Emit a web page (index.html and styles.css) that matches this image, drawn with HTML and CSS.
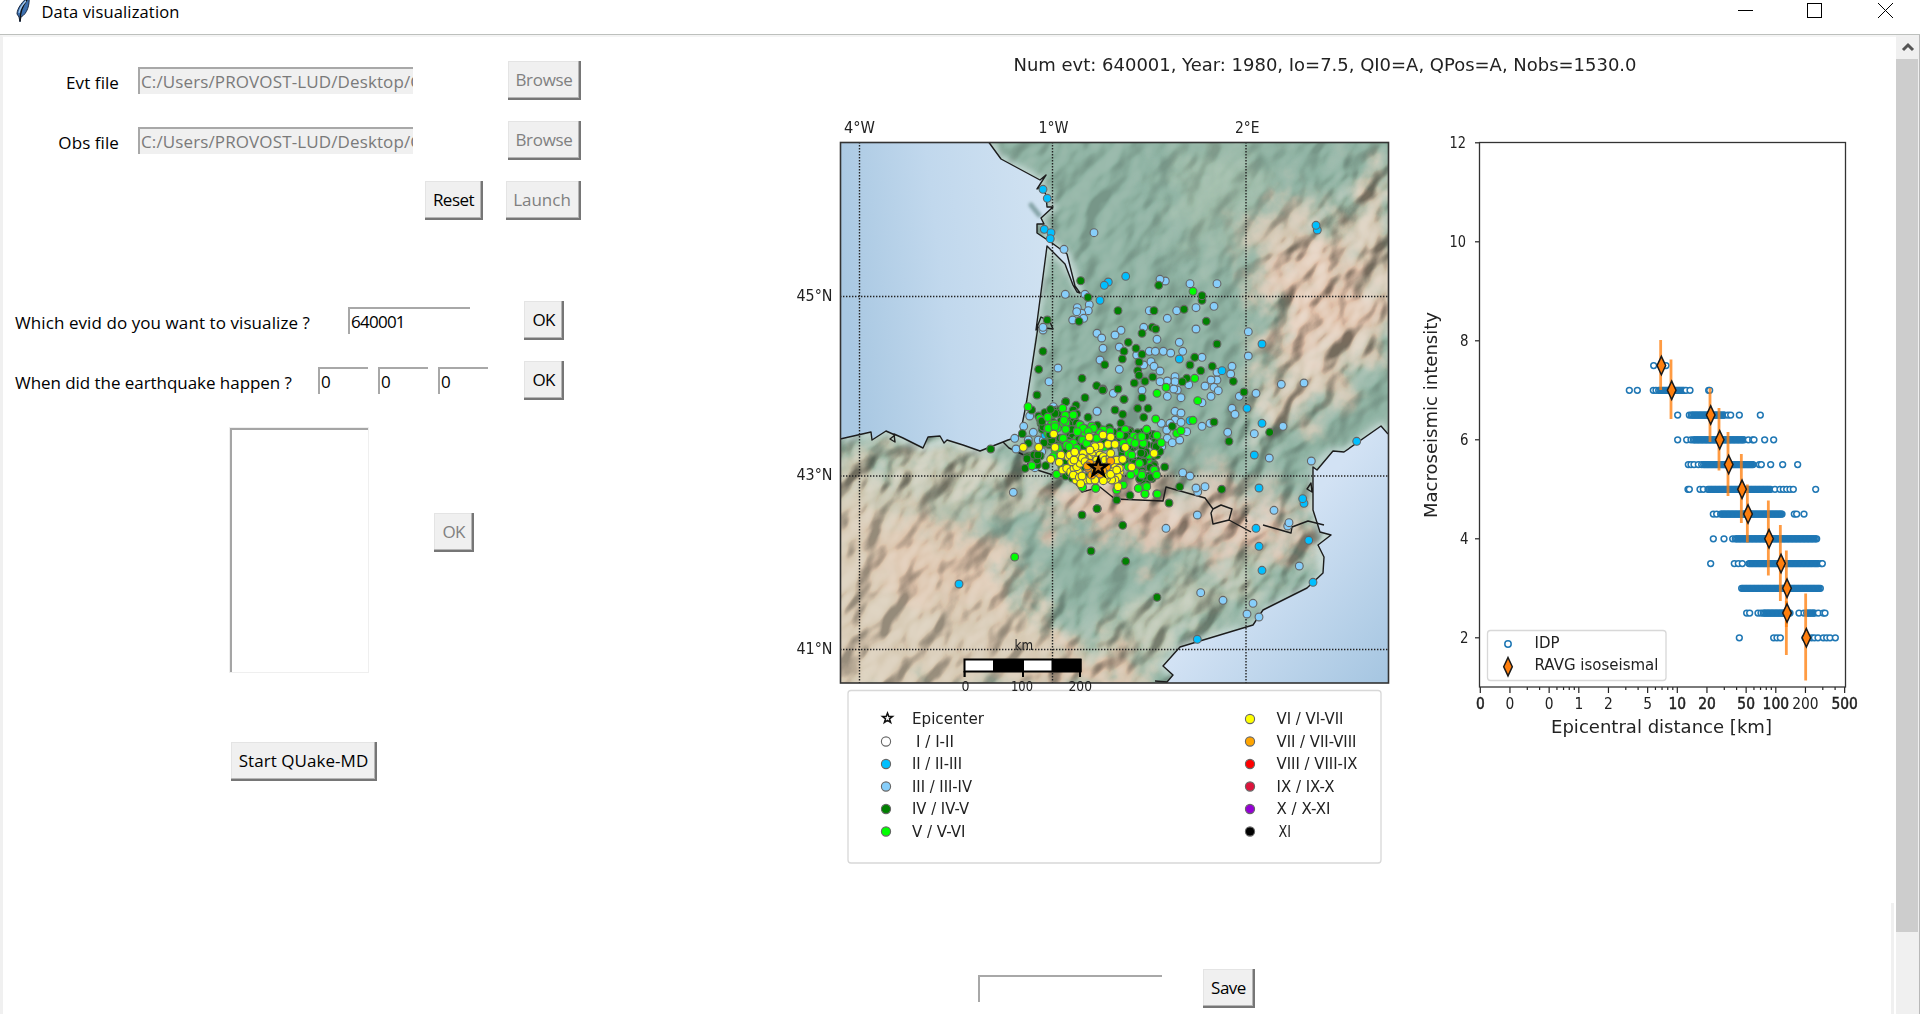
FILE: index.html
```html
<!DOCTYPE html>
<html lang="en">
<head>
<meta charset="utf-8">
<title>Data visualization</title>
<link rel="stylesheet" href="styles.css">
</head>
<body>
<header class="titlebar">
  <svg class="feather" width="18" height="24" viewBox="0 0 18 24">
    <path d="M14 -4C8 1 2 8 2 14l2 3 1 5 1-5c6-3 9-12 8-21z" fill="#3c6fae" stroke="#1b2b45" stroke-width="1"/>
    <path d="M12 0C8 5 5 12 5 21" fill="none" stroke="#111" stroke-width="1.3"/>
    <path d="M11 1C7 5 5 8 4 13" fill="none" stroke="#a9cdf0" stroke-width="1.2"/>
  </svg>
  <span class="title">Data visualization</span>
  <svg class="controls" width="160" height="20" viewBox="0 0 160 20" shape-rendering="crispEdges">
    <path d="M0 10.5H15M69.5 3.500H83.500V17.500H69.500Z" fill="none" stroke="#000"/>
    <path d="M140 3L155 18M155 3L140 18" stroke="#000" shape-rendering="auto"/>
  </svg>
</header>
<div class="window">
  <main class="content">
    <section class="form">
      <div class="row">
        <label class="label file-label">Evt file</label>
        <div class="entry path disabled"><span>C:/Users/PROVOST-LUD/Desktop/Q</span></div>
        <button class="btn browse disabled">Browse</button>
      </div>
      <div class="row">
        <label class="label file-label">Obs file</label>
        <div class="entry path disabled"><span>C:/Users/PROVOST-LUD/Desktop/Q</span></div>
        <button class="btn browse disabled">Browse</button>
      </div>
      <div class="row actions">
        <button class="btn reset">Reset</button>
        <button class="btn launch disabled">Launch</button>
      </div>
      <div class="row evid">
        <label class="label question">Which evid do you want to visualize ?</label>
        <div class="entry evid-entry"><span>640001</span></div>
        <button class="btn ok">OK</button>
      </div>
      <div class="row">
        <label class="label question when">When did the earthquake happen ?</label>
        <div class="dates">
          <div class="entry"><span>0</span></div>
          <div class="entry"><span>0</span></div>
          <div class="entry"><span>0</span></div>
        </div>
        <button class="btn ok">OK</button>
      </div>
      <div class="list-row">
        <div class="listbox"></div>
        <button class="btn ok disabled">OK</button>
      </div>
      <button class="btn start">Start QUake-MD</button>
    </section>
    <section class="results">
      <svg class="figure" width="1100" height="835" viewBox="780 35 1100 835">
        <defs>
          <clipPath id="frame"><rect x="840.500" y="142.500" width="548" height="540.500"/></clipPath>
          <linearGradient id="atl" x1="0" y1=".35" x2="1" y2=".2">
            <stop offset="0" stop-color="#a9c8e2"/><stop offset=".4" stop-color="#c1d8ed"/><stop offset="1" stop-color="#d5e5f3"/>
          </linearGradient>
          <linearGradient id="med" gradientUnits="userSpaceOnUse" x1="1260" y1="560" x2="1400" y2="680">
            <stop offset="0" stop-color="#d2e2f4"/><stop offset="1" stop-color="#a3c4e0"/>
          </linearGradient>
          <filter id="patch" x="-10%" y="-10%" width="120%" height="120%">
            <feGaussianBlur stdDeviation="13" result="b"/>
            <feTurbulence type="fractalNoise" baseFrequency=".03" numOctaves="4" seed="4" result="n"/>
            <feDisplacementMap in="b" in2="n" scale="80" xChannelSelector="R" yChannelSelector="G"/>
          </filter>
          <filter id="relief" x="0" y="0" width="100%" height="100%" color-interpolation-filters="sRGB">
            <feTurbulence type="fractalNoise" baseFrequency=".024 .042" numOctaves="3" seed="11"/>
            <feColorMatrix values="0 0 0 0 0  0 0 0 0 0  0 0 0 0 0  1 0 0 0 0"/>
            <feGaussianBlur stdDeviation="2"/>
            <feDiffuseLighting surfaceScale="12" diffuseConstant=".84" lighting-color="#fff">
              <feDistantLight azimuth="250" elevation="38"/>
            </feDiffuseLighting>
            <feColorMatrix values=".5 0 0 0 .28  0 .48 0 0 .27  0 0 .48 0 .26  0 0 0 1 0"/>
          </filter>
          <filter id="soft" x="-20%" y="-20%" width="140%" height="140%"><feGaussianBlur stdDeviation="14"/></filter>
          <filter id="halo" x="-20%" y="-20%" width="140%" height="140%"><feGaussianBlur stdDeviation="3"/></filter>
          <filter id="islet" x="-100%" y="-100%" width="300%" height="300%"><feGaussianBlur stdDeviation="1.5"/></filter>
          <mask id="high" maskUnits="userSpaceOnUse" x="800" y="100" width="640" height="620">
            <rect x="800" y="100" width="640" height="620" fill="#585858"/>
            <g fill="none" stroke="#fff" filter="url(#soft)" stroke-linecap="round">
              <path d="M830 465L1060 480L1180 510L1300 525" stroke-width="56"/>
              <path d="M1270 420L1300 330L1290 250L1390 180L1380 330Z" stroke-width="50" fill="#fff"/>
              <path d="M840 520L960 550L1040 620L860 690Z" stroke-width="60" fill="#aaa" stroke="#aaa"/>
              <path d="M1050 690L1200 600L1300 560" stroke-width="70" stroke="#ccc"/>
            </g>
          </mask>
        </defs>
        <g clip-path="url(#frame)">
          <rect x="840" y="142" width="550" height="542" fill="#8cb2a3"/>
          <g filter="url(#patch)">
            <path d="M800 500H900L960 520L1010 560L1050 620L1120 700H800Z" fill="#d5c9b4"/>
            <path d="M800 455H960L1060 485L1120 490V520L1000 500L880 500H800Z" fill="#c3c5b1"/>
            <path d="M1040 488L1120 495L1190 508L1320 518L1310 545L1230 555L1140 540L1050 520Z" fill="#dfc1ad"/>
            <path d="M890 525L970 525L1020 580L1010 610L900 600L860 550Z" fill="#dcc6b0"/>
            <path d="M1050 475L1170 470L1300 500L1290 520L1170 520Z" fill="#cdbfae"/>
            <path d="M1250 420L1270 370L1260 290L1235 250L1260 200L1300 190L1330 260L1350 180L1400 180V330L1340 400L1290 430Z" fill="#d0c5b1"/>
            <path d="M1300 230L1325 280L1345 250L1370 280L1350 340L1290 350L1270 290Z" fill="#e0c6b2"/>
            <path d="M1050 660L1140 600L1240 560L1290 560L1180 640L1120 700H1050Z" fill="#bec5b2" opacity=".8"/>
            <path d="M1020 660L1090 640L1140 670L1140 700H1020Z" fill="#dac4ae"/>
            <path d="M1180 140L1260 150L1230 240L1180 260Z" fill="#a6c1ae" opacity=".6"/>
          </g>
          <g class="hillshade" mask="url(#high)"><rect transform="rotate(-48 1115 412)" x="700" y="0" width="830" height="830" filter="url(#relief)"/></g>
          <path class="halo" d="M989 142.500L1001 159L1040 180L1046 195L1053 207L1041 218L1052 243L1067 254L1080 293L1065 264L1047 246L1036 330L1027 399L1021 430L1008 440L980 451L947 440L923 448L886 431L841 439M1388 434L1381 426L1344 452L1333 451L1313 467V510L1320 532L1331 535L1318 545L1323 573L1307 588L1263 610L1253 625L1180 647L1163 666L1173 675"/>
          <path fill="url(#atl)" d="M840 142H989L1001 159L1040 180L1046 175L1037 189L1046 195L1047 207L1053 207L1041 218L1044 224H1037V233L1052 243L1067 254L1075 286L1080 293L1075 288L1065 264L1047 246L1036 330L1027 399L1025 410L1021 430L1018 437L1008 440L980 451L947 440L944 443L940 436L928 437L923 448L903 438L886 431L872 440L871 432L840 439Z"/>
          <path fill="url(#med)" d="M1390 434L1381 426L1344 452L1333 451L1317 470L1313 467V510L1320 532L1331 535L1318 545L1324 557L1323 573L1307 588L1263 610L1253 625L1180 647L1163 666L1173 675L1166 684H1390Z"/>
          <path d="M1031 205L1039 215" stroke="#7e9ea0" stroke-width="5" stroke-linecap="round" filter="url(#islet)" opacity=".9"/>
          <g class="coast">
            <path d="M989 142.500L1001 159L1040 180L1046 175L1037 189L1042 186L1046 195L1047 207L1053 207L1041 218L1044 224H1037V233L1052 243L1067 254L1071 270L1075 286L1080 293L1077 292L1073 285L1065 264L1047 246L1036 330L1041 317L1050 322L1053 329L1038 327L1027 399L1025 410L1021 430L1018 437L1008 440L1003 442L980 451L963 445L947 440L944 443L940 436L928 437L923 448L903 438L894 434L895 442L890 439L895 435L886 431L872 440L871 432L840 439"/>
            <path d="M1003 442L1009 448L1028 457V467L1053 475L1072 478L1082 492L1100 487L1115 499L1163 501L1166 487L1205 498L1213 509L1211 513L1213 524L1229 520L1232 509L1221 505L1213 509M1229 520L1251 532M1246 519L1247 522M1263 525L1291 533L1292 527L1308 521L1324 525"/>
            <path d="M1388 434L1381 426L1344 452L1333 451L1317 470L1313 467V510L1320 532L1331 535L1318 545L1324 557L1323 573L1307 588L1263 610L1253 625L1180 647L1163 666L1173 675L1167 682L1155 681M1307 489L1311 483L1312 492Z"/>
          </g>
          <path class="graticule" d="M859.500 142V683M1052.500 142V683M1246 142V683M840 296.500H1389M840 476H1389M840 649.500H1389"/>
        </g>
        <g id="quakes" class="quakes"></g>
        <path d="M0 -9L2.200 -2.900L8.800 -2.800L3.500 1.200L5.500 7.500L0 3.700L-5.500 7.500L-3.500 1.200L-8.800 -2.800L-2.200 -2.900Z" transform="translate(1098.300 467.500)" fill="#b36b12" stroke="#000" stroke-width="2.600"/>
        <rect x="840.500" y="142.500" width="548" height="540.500" class="box"/>
        <g class="tick">
          <text x="844" y="132.500" textLength="31">4°W</text><text x="1038.500" y="132.500" textLength="30">1°W</text><text x="1235" y="132.500" textLength="24.500">2°E</text>
          <text x="796.500" y="301" textLength="36">45°N</text><text x="796.500" y="479.500" textLength="36">43°N</text><text x="796.500" y="654" textLength="36">41°N</text>
        </g>
        <rect x="848" y="690.500" width="533" height="172.500" rx="3" class="legend-box"/>
        <rect x="964.500" y="659.500" width="116" height="12" fill="#fff" stroke="#000" stroke-width="2"/>
        <path d="M993 659H1024V672H993ZM1051.500 659H1081.500V672H1051.500ZM963.500 671h2.200v6h-2.200zM1022 671h2v6h-2zM1079 671h2v6h-2z"/>
        <g class="scale">
          <text x="1014.500" y="650" textLength="18.500">km</text><text x="961.500" y="690.500" textLength="8">0</text><text x="1011" y="690.500" textLength="22">100</text><text x="1068.500" y="690.500" textLength="23.500">200</text>
        </g>
        <path d="M0 -5L1.300 -1.600L5 -1.500L2 .8L3.100 4.400L0 2.300L-3.100 4.400L-2 .8L-5 -1.500L-1.300 -1.600Z" transform="translate(887.500 718)" fill="#fff" stroke="#111" stroke-width="1.500"/>
        <g class="quakes">
          <circle cx="886" cy="741.500" r="4.600" fill="#fff"/><circle cx="886" cy="764" r="4.600" fill="#00bfff"/><circle cx="886" cy="786.500" r="4.600" fill="#87cefa"/><circle cx="886" cy="809" r="4.600" fill="#008000"/><circle cx="886" cy="831.500" r="4.600" fill="#0f0"/>
          <circle cx="1250" cy="719" r="4.600" fill="#ff0"/><circle cx="1250" cy="741.500" r="4.600" fill="orange"/><circle cx="1250" cy="764" r="4.600" fill="red"/><circle cx="1250" cy="786.500" r="4.600" fill="crimson"/><circle cx="1250" cy="809" r="4.600" fill="#9400d3"/><circle cx="1250" cy="831.500" r="4.600" fill="#000"/>
        </g>
        <g class="legend">
          <text x="912" y="724" textLength="72">Epicenter</text><text x="916" y="746.500" textLength="38">I / I-II</text><text x="912" y="769" textLength="50">II / II-III</text><text x="912" y="791.500" textLength="60">III / III-IV</text><text x="912" y="814" textLength="57">IV / IV-V</text><text x="912" y="836.500" textLength="53.500">V / V-VI</text>
          <text x="1276.500" y="724" textLength="67">VI / VI-VII</text><text x="1276.500" y="746.500" textLength="80">VII / VII-VIII</text><text x="1276.500" y="769" textLength="81">VIII / VIII-IX</text><text x="1276.500" y="791.500" textLength="58">IX / IX-X</text><text x="1276.500" y="814" textLength="54">X / X-XI</text><text x="1278.500" y="836.500" textLength="12.500">XI</text>
        </g>
        <text class="suptitle" x="1013.500" y="71" textLength="623">Num evt: 640001, Year: 1980, Io=7.5, QI0=A, QPos=A, Nobs=1530.0</text>
        <g id="decay"></g>
        <rect x="1479.500" y="142.500" width="366" height="544.500" class="box thin"/>
        <rect x="1487.500" y="630.500" width="178.500" height="50" rx="3" class="legend-box"/>
        <circle class="idp" cx="1508" cy="644" r="3.200"/>
        <path class="iso" d="M1508 657.500l4.300 9.200-4.300 9.200-4.300-9.200z"/>
        <g class="legend"><text x="1534.500" y="647.500" textLength="25">IDP</text><text x="1534.500" y="670" textLength="124">RAVG isoseismal</text></g>
        <text class="axis" x="1551" y="733" textLength="221">Epicentral distance [km]</text>
        <text class="axis" transform="translate(1437 518) rotate(-90)" textLength="206">Macroseismic intensity</text>
      </svg>
      <div class="save-row">
        <div class="entry save-entry"></div>
        <button class="btn save">Save</button>
      </div>
    </section>
    <div class="inner-edge"></div>
  </main>
  <aside class="scrollbar">
    <div class="arrow"><svg width="14" height="10" viewBox="0 0 14 10"><path d="M2 8L7 3L12 8" fill="none" stroke="#555" stroke-width="3"/></svg></div>
    <div class="thumb"></div>
  </aside>
</div>
<script src="plots.js"></script>
</body>
</html>
```
FILE: styles.css
```css
* { box-sizing: border-box; }
body { margin: 0; height: 1014px; overflow: hidden; background: #fff; color: #000; font-family: "Open Sans", "Noto Sans", sans-serif; display: flex; flex-direction: column; }
.titlebar { height: 35px; flex: none; border-bottom: 1px solid #bdc0bd; display: flex; align-items: flex-start; padding-left: 15px; }
.title { margin: 1px 0 0 8.5px; font-size: 16.5px; line-height: 22px; letter-spacing: .15px; }
.controls { margin: 0 22px 0 auto; }
.window { flex: 1; min-height: 0; display: flex; border-right: 1px solid #b9b9b9; }
.content { flex: 1; min-width: 0; display: flex; border-left: 3px solid #f0f0f0; border-top: 2px solid #f4f4f4; overflow: hidden; }
.form { width: 777px; flex: none; padding-top: 13.5px; font-size: 17px; }
.row { height: 60px; display: flex; align-items: center; }
.label { letter-spacing: .08px; padding-top: 3px; white-space: nowrap; }
.file-label { width: 116px; text-align: right; }
.entry { height: 27px; border-top: 2px solid #a8a8a8; border-left: 2px solid #a8a8a8; background: #fff; overflow: hidden; white-space: nowrap; line-height: 25px; padding-left: 1px; letter-spacing: -.75px; }
.entry.disabled { background: #f0f0f0; color: #7a7a7a; }
.path { width: 275px; margin-left: 19px; letter-spacing: .12px; }
.btn { height: 39px; padding: 0 1px 2px 0; border: 0; border-radius: 0; background: #f0f0f0; box-shadow: inset -2px -2px #767676, inset -3px -3px #b5b5b5, inset 1px 1px #e4e4e4; font: 17px "Open Sans", sans-serif; letter-spacing: -.5px; color: #000; text-align: center; }
.btn.disabled { color: #808080; }
.browse { width: 73px; margin-left: 95px; letter-spacing: -.3px; }
.actions { padding-left: 422px; gap: 23px; }
.reset { width: 58px; }
.launch { width: 75px; padding-right: 3px; letter-spacing: 0; }
.evid { margin-top: 60px; }
.question { width: 333px; padding-left: 12px; }
.evid-entry { width: 122px; margin-left: 12px; }
.ok { width: 40px; margin-left: 54px; letter-spacing: -.75px; }
.when { width: 303px; letter-spacing: -.05px; }
.dates { display: flex; gap: 10px; margin-left: 12px; }
.dates .entry { width: 50px; }
.dates + .ok { margin-left: 36px; }
.list-row { margin: 16px 0 0 226px; height: 246px; display: flex; align-items: flex-start; }
.listbox { width: 140px; height: 246px; border: 1px solid #efefef; box-shadow: inset 2px 2px #a5a5a5; }
.list-row .ok { margin: 86px 0 0 65px; }
.start { display: block; width: 146px; margin: 69px 0 0 228px; letter-spacing: .05px; }
.results { flex: 1; min-width: 0; margin-top: -2px; display: flex; flex-direction: column; }
.figure { display: block; flex: none; }
.save-row { margin: 99px 0 0 198px; display: flex; align-items: center; gap: 41px; }
.save-entry { width: 184px; }
.save { width: 52px; }
.inner-edge { width: 3px; flex: none; margin: 866px 2px 0 0; background: #f0f0f0; }
.scrollbar { width: 23px; flex: none; background: #f0f0f0; display: flex; flex-direction: column; }
.arrow { height: 24px; display: flex; align-items: center; justify-content: center; }
.thumb { height: 873px; background: #cdcdcd; margin-right: 1px; }
.figure text { font-family: "DejaVu Sans", sans-serif; fill: #222; }
.tick text, .tick { font-size: 15px; }
.tick .strong { stroke: #222; stroke-width: .5; }
.scale { font-size: 13.5px; }
.legend { font-size: 15px; }
.axis, .suptitle { font-size: 17px; }
.box { fill: none; stroke: #333; stroke-width: 1.6; }
.box.thin { stroke-width: 1.3; }
.legend-box { fill: #fff; stroke: #d8d8d8; stroke-width: 1.3; }
.hillshade { mix-blend-mode: hard-light; }
.halo { fill: none; stroke: #dce9ea; stroke-width: 7; opacity: .7; filter: url(#halo); }
.coast { fill: none; stroke: #1c1c1c; stroke-width: 1.4; stroke-linejoin: round; }
.graticule { fill: none; stroke: #222; stroke-width: 1.4; stroke-dasharray: 1.4 1.6; }
.quakes circle { stroke: #666; stroke-width: 1.1; }
.idp { fill: #fff; stroke: #1f77b4; stroke-width: 1.5; }
.iso { fill: #ff7f0e; stroke: #1a1a1a; stroke-width: 1.5; }
.error { stroke: #ff7f0e; stroke-width: 2.8; opacity: .78; }
.ticks { stroke: #222; stroke-width: 1.2; }
```
FILE: plots.js
```js
const NS = 'http://www.w3.org/2000/svg';
function add(parent, name, attrs, text) {
  const el = document.createElementNS(NS, name);
  for (const k in attrs) el.setAttribute(k, attrs[k]);
  if (text !== undefined) el.textContent = text;
  parent.appendChild(el);
  return el;
}
const COLORS = { l: '#87cefa', b: '#00bfff', g: '#008000', m: '#00ff00', y: '#ffff00', o: '#ffa500' };
// Observations by map tile: [origin x, origin y, class, "x,y ..."] in thirds of a pixel.
const TILES = [
  [780,100,'l','942,398 852,448 856,583 915,583 892,623 928,614 925,632 905,640 890,635 878,660 911,655 789,690 789,682 951,700 965,714 969,745 960,780 834,804 807,845'],
  [1090,100,'l','226,543 210,538 300,551 381,551 318,623 372,619 178,632 260,632 232,655 318,687 161,682 201,718 268,727 475,695 475,768 93,691 75,705 88,741 178,754 196,754 220,754 242,759 278,754 336,772 88,808 161,795 183,785 192,799 210,813 426,799 422,822 381,817 381,840 363,840 345,858 372,862 385,872 363,889 255,830 255,845 232,843 210,845 262,870 251,867 296,854 232,889 273,893 156,871 70,880 448,889 498,880 574,853 642,849 140,765'],
  [1090,390,'l','426,55 435,73 22,64 255,64 273,69 255,90 273,97 336,109 360,100 413,127 493,131 579,109 538,204 664,213 278,248 300,258 323,306 318,294 345,290 552,361 322,375 228,415 593,408 597,398 628,528 332,608 399,631 489,640 471,672 507,681 232,145 247,158 269,150 290,125 240,100 214,100 230,120 215,170 336,38'],
  [780,390,'l','951,64 749,78 731,109 704,145 708,177 760,127 700,307 765,233 745,150 785,185 795,160 820,50 830,60 775,150 790,150'],
  [780,100,'b','789,268 802,295 793,388 813,398 811,416 985,546 973,556 960,601'],
  [1090,100,'b','107,529 682,390 678,376 516,732 268,777 396,812'],
  [1090,390,'b','471,55 516,100 493,195 507,294 642,340 638,326 498,415 507,469 516,541 656,451 669,577 322,748 800,154 300,92'],
  [780,390,'b','795,135 537,582'],
  [780,100,'g','902,542 924,592 897,664 802,660 789,754 776,808 771,885 974,794 906,835 950,857 968,867 857,905 915,893'],
  [1090,100,'g','206,556 336,601 336,587 84,632 192,632 282,628 349,664 187,682 197,687 156,700 381,732 115,727 138,745 102,754 156,763 97,777 147,786 314,772 300,795 332,812 367,799 143,812 147,826 188,831 165,844 133,849 290,835 277,845 430,844 84,867 462,876 102,898 156,893'],
  [1090,390,'g','143,55 174,55 75,60 98,73 161,82 372,96 539,127 417,154 224,231 269,290 395,298 237,339 98,406 107,514 201,622 22,356 80,330 120,316 93,100 116,122 102,28 247,109 3,483 40,0'],
  [780,390,'g','857,35 888,46 776,78 755,60 727,131 632,177 735,235 758,200 771,217 745,160 797,227 857,258 924,82 880,60 890,72 840,60 875,85 787,118 906,375 951,356 968,0'],
  [1000,400,'G',''],
  [1090,100,'m','309,574 314,835 228,862 201,880 323,902'],
  [1090,390,'m','309,91 260,130 273,122 214,158 197,87 201,136 170,118 152,140 161,158 120,154 147,222 156,250 192,240 200,312 165,312 165,290 147,294'],
  [780,390,'m','744,50 848,55 803,82 856,76 852,91 824,102 857,118 901,104 892,122 848,145 906,150 803,115 935,108 829,253 947,294 704,501 867,160 880,165'],
  [1000,400,'m','145,85 165,80 240,75 250,85 280,85 310,90 330,95 360,105 190,115 200,135 220,130 208,140 390,125 405,130 430,130 425,110 440,88 385,160 395,165 418,190 425,225 405,215 392,225 463,210 470,225 435,282 415,265 440,260 472,282 385,200 370,255 350,270 287,265 248,262 170,223 248,120 232,95 165,150 175,145 265,95 300,100 290,115 260,130 160,170 230,145 370,130'],
  [1000,400,'y','70,142 116,142 161,102 165,142 205,170 183,165 178,187 152,178 188,210 200,205 212,215 222,205 225,190 235,215 228,240 220,225 250,240 230,200 240,190 215,185 210,165 225,175 232,165 260,170 262,182 275,168 288,170 278,156 295,150 300,165 310,170 315,180 330,180 330,172 345,190 345,200 360,215 355,230 345,240 335,240 320,235 325,225 340,215 358,205 260,240 270,240 285,240 238,232 222,180 250,160 224,156 247,174 255,185 290,180 350,180 268,111 309,105 332,111 324,133 345,133 300,138 285,140 270,150 376,142 332,160 368,178 395,201 462,160 332,223 350,210 246,228 242,251 310,242 354,260'],
  [1000,400,'o','270,190 265,205 300,222 275,225 320,200 285,215 262,198 290,195 308,212 332,183']
];
const quakes = document.getElementById('quakes');
const dot = (x, y, c) => add(quakes, 'circle', { cx: x.toFixed(1), cy: y.toFixed(1), r: 3.9, fill: COLORS[c] });
// Dense belt of class IV and V observations round the epicentre.
let seed = 7;
const rnd = () => (seed = (seed * 16807) % 2147483647) / 2147483647;
function belt() {
  for (const [cx, cy, rx, ry, n] of [[175,85,65,65,52],[300,110,110,35,55],[420,150,60,65,52],[440,220,38,40,18],[105,180,28,20,10],[230,190,50,60,25]])
    for (let i = 0; i < n; i++) {
      const a = rnd() * 6.283, q = Math.sqrt(rnd());
      dot(1000 + (cx + rx * q * Math.cos(a)) / 3, 400 + (cy + ry * q * Math.sin(a)) / 3, rnd() < .8 ? 'g' : 'm');
    }
}
for (const [ox, oy, c, list] of TILES) {
  if (c === 'G') { belt(); continue; }
  for (const p of list.split(' ')) { const [x, y] = p.split(','); dot(ox + x / 3, oy + y / 3, c); }
}

const decay = document.getElementById('decay');
const X = d => 1578.8 + 98.5 * Math.log10(d), Y = i => 687.3 - 49.5 * (i - 1);
// Intensity rows: single points and dense spans, in thirds of a pixel from x = 1400.
const ROWS = [
  [7.5,[761,798]],[7,[688,712,760,768,[776,855],858,870,926,929]],[6.5,[833,868,[874,975],984,992,1018,1081]],
  [6,[833,860,873,[880,1035],1045,1058,1062,1094,1121]],[5.5,[865,873,882,895,905,[911,1062],1078,1084,1112,1148,1193]],
  [5,[864,868,900,910,[924,1115],1125,1140,1150,1160,1170,1180,1247]],[4.500,[940,950,[962,1149],1183,1190,1212]],
  [4,[940,972,998,[1006,1250]]],[3.5,[932,1003,1015,1027,[1047,1256],1264,1267]],[3,[[1025,1263]]],
  [2.5,[1040,1049,1074,1083,[1090,1170],1197,1212,[1220,1245],1255,1270,1275]],[2,[1018,1121,1131,1141,1215,1235,1243,1254,1270,1280,1290,1306]]
];
for (const [i, xs] of ROWS) for (const x of xs) {
  const dense = Array.isArray(x), span = dense ? x : [x, x];
  if (dense) add(decay, 'path', { d: `M${1400 + span[0] / 3} ${Y(i)}H${1400 + span[1] / 3}`, stroke: '#1f77b4', 'stroke-width': 6.4 });
  for (let v = span[0]; v <= span[1]; v += 4) add(decay, 'circle', { class: 'idp', cx: 1400 + v / 3, cy: Y(i), r: 2.9, 'fill-opacity': dense ? 0 : 1 });
}
const ISO = [[7.5,782,340,390],[7,813,359.500,419],[6.5,930,388,442],[6,957,408,470.5],[5.5,984,432,496],[5,1024,454,523],[4.5,1042,484.5,542.5],[4,1105,500.5,575.5],[3.5,1141,525,601],[3,1159,550.5,627],[2.5,1159,601,655],[2,1217,593.5,680.5]];
for (const [, x, a, b] of ISO) add(decay, 'path', { class: 'error', d: `M${1400 + x / 3} ${a}V${b}` });
for (const [i, x] of ISO) add(decay, 'path', { class: 'iso', d: `M${1400.7 + x / 3} ${Y(i) - 9.2}l4.300 9.200-4.300 9.200-4.300-9.200z` });
for (const i of [2, 4, 6, 8, 10, 12]) {
  add(decay, 'path', { class: 'ticks', d: `M1475 ${Y(i)}H1480` });
  const w = i > 9 ? 16.5 : 8.5;
  add(add(decay, 'g', { class: 'tick' }), 'text', { x: i > 9 ? 1449.5 : 1460, y: Y(i) + 5.5, textLength: w }, i);
}
for (const [d, t, k] of [[.1,'0',1],[.2,'0'],[.5,'0'],[1,'1'],[2,'2'],[5,'5'],[10,'10',1],[20,'20',1],[50,'50',1],[100,'100',1],[200,'200'],[500,'500',1]]) {
  add(decay, 'path', { class: 'ticks', d: `M${X(d)} 687V693` });
  const w = t.length * 8.8;
  add(add(decay, 'g', { class: 'tick' }), 'text', { class: k ? 'strong' : 'plain', x: X(d) - w / 2, y: 709, textLength: w }, t);
}
for (const d of [.3,.4,.6,.7,.8,.9,3,4,6,7,8,9,30,40,60,70,80,90,300,400]) add(decay, 'path', { class: 'ticks', d: `M${X(d)} 687V690` });
document.querySelectorAll('text[textLength]').forEach(t => t.setAttribute('lengthAdjust', 'spacingAndGlyphs'));
```
